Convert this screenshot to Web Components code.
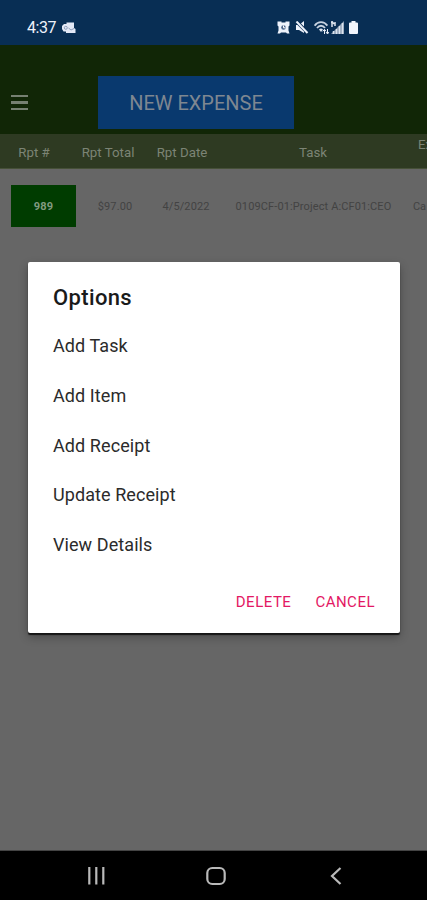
<!DOCTYPE html>
<html lang="en">
<head>
<meta charset="utf-8">
<title>Expenses</title>
<style>
html,body{margin:0;height:100%;overflow:hidden;background:#000;font-family:Roboto,"Liberation Sans",sans-serif}
</style>
</head>
<body>
<expense-app></expense-app>
<script>
const define = (name, html) => customElements.define(name, class extends HTMLElement {
  constructor() {
    super();
    const t = document.createElement('template');
    t.innerHTML = html;
    this.attachShadow({mode: 'open'}).append(t.content.cloneNode(true));
  }
});

define('status-bar', `
<style>
:host{display:flex;box-sizing:border-box;height:45px;padding:10px 69px 0 27px;background:#082e54;color:#edf2fb;justify-content:space-between;align-items:center}
.l{display:flex;align-items:center;gap:6px;font-size:16px;line-height:20px;font-weight:400;letter-spacing:-.45px}
.r{display:flex;gap:5px;align-items:center}
svg{display:block}
</style>
<div class="l"><span>4:37</span>
<svg width="14" height="12" viewBox="0 0 14 12"><path d="M4.500 .5H12v5.500l1.500 1V11H4V9.500H1.500L0 7V4l2-2h2.500z" fill="#e3e9f6"/><circle cx="3.800" cy="5.800" r="1.500" fill="none" stroke="#8496b3" stroke-width=".9"/><path d="M6.500 6l2.500 2 3-1.500" fill="none" stroke="#8496b3" stroke-width=".9"/></svg></div>
<div class="r">
<svg width="13" height="13" viewBox="0 0 13 13"><path d="M.5.5h4v1h4v-1h4v4l-1 1v4l1 3H10l-1-1H4l-1 1H.5l1-3v-4l-1-1z" fill="#edf2fb"/><circle cx="6.500" cy="6.500" r="2.300" fill="#4b658a"/><path d="M6.500 4.500v2.300h2" fill="none" stroke="#fff"/></svg>
<svg width="14" height="13" viewBox="0 0 14 13"><path d="M1 4h3l5-4v12L4 9H1z" fill="#edf2fb"/><path d="M1 0l12 12" stroke="#082e54" stroke-width="3.500"/><path d="M1.500 .5l11 11.500" stroke="#edf2fb" stroke-width="2"/></svg>
<svg width="15" height="14" viewBox="0 0 15 14"><g fill="none" stroke="#c7d2e0" stroke-width="1.800"><path d="M.6 4.600C4 0 10 0 13.400 4.600M3 7c2.300-3 5.700-3 8 0"/></g><path d="M5 8.500q2-2 4 0l-2 2.500z" fill="#dde5ef"/><path d="M10.500 13V8.500M8.800 10.300l1.700-2 1.500 2M13.500 8v4.500M12 11l1.500 2L15 11" fill="none" stroke="#edf2fb"/></svg>
<svg style="margin-left:-3px" width="13" height="13" viewBox="0 0 13 13"><path d="M0 13L13 0v13z" fill="#8fa1b6"/><path d="M2.500 13V10M5.500 13V8M8.500 13V5M11.500 13V2M1 1v5M0 2l1-1.500L3 3M4 1v4" stroke="#dbe4ee" stroke-width="1.500" fill="none"/></svg>
<svg width="9" height="13" viewBox="0 0 9 13"><path d="M2.500 0h4v1.500H8q1 0 1 1V12q0 1-1 1H1q-1 0-1-1V2.500q0-1 1-1h1.500z" fill="#f1f5fc"/></svg>
</div>`);

define('app-bar', `
<style>
:host{display:flex;box-sizing:border-box;height:89px;background:#112606;padding:31px 0 0 11px;align-items:flex-start}
.menu{display:flex;flex-direction:column;gap:4px;margin-top:19px;width:17px}
.menu i{height:2.400px;background:#768071}
button{all:unset;box-sizing:border-box;margin-left:70px;width:196px;height:53px;background:#09396e;color:#7e8791;text-align:center;font-size:20px;line-height:55px;letter-spacing:0}
</style>
<div class="menu"><i></i><i></i><i></i></div><button><slot></slot></button>`);

define('table-row', `
<style>
:host{display:grid;grid-template-columns:68px 80px 68px 194px 60px;text-align:center;white-space:nowrap;overflow:hidden}
:host([head]){height:35px;box-sizing:border-box;background:#2e3a22;border-bottom:1px solid #465038;color:#7c8475;font-size:13.300px;line-height:37px}
:host(:not([head])){margin-top:16px;height:43px;line-height:43px;color:#434343;font-size:11px;letter-spacing:.12px}
</style><slot></slot>`);

define('report-badge', `
<style>:host{display:block;margin-left:11px;width:65px;height:42px;line-height:43px;background:#003c00;color:#829a80;font-weight:700;font-size:11px}</style><slot></slot>`);

define('options-dialog', `
<style>
:host{position:absolute;left:28px;top:262px;width:372px;height:371px;box-sizing:border-box;background:#fff;border-radius:2px;padding:21px 25px 0;box-shadow:0 2px 1px #161616,0 4px 10px rgba(0,0,0,.3);color:#2b2b2b}
h2{margin:0 0 9px;font-size:22px;line-height:29px;font-weight:500;color:#1a1a1a;letter-spacing:.36px}
footer{display:flex;justify-content:flex-end;gap:24px;margin-top:20px;color:#e31864;font-size:15px;line-height:24px;letter-spacing:.5px}
</style>
<h2><slot name="title"></slot></h2><slot></slot>
<footer><slot name="action"></slot></footer>`);

define('option-item', `<style>:host{display:block;height:49.75px;line-height:50px;font-size:18px;letter-spacing:.08px}</style><slot></slot>`);

define('nav-bar', `
<style>:host{display:flex;height:49px;background:#000}svg{display:block}</style>
<svg width="427" height="49" viewBox="0 0 427 49" fill="none" stroke="#b9b9b9" stroke-width="2.200"><path d="M89.300 16v17.500M96.300 16v17.500M103.300 16v17.500"/><rect x="207.300" y="17" width="17.400" height="16" rx="5"/><path d="M340.500 17L332 25l8.500 8"/></svg>`);

define('expense-app', `
<style>
:host{display:flex;flex-direction:column;width:427px;height:900px;position:relative;overflow:hidden}
main{flex:1;background:#666;border-bottom:1px solid #444;box-sizing:border-box}
.date{padding-left:8px}
.total{padding-left:14px}
.task{padding-left:1px}
.cut{text-align:left;padding-left:3px;letter-spacing:-.2px}
.head-cut{text-align:left;padding-left:8px;line-height:22px}
</style>
<status-bar></status-bar>
<app-bar>NEW EXPENSE</app-bar>
<table-row head><span>Rpt #</span><span>Rpt Total</span><span>Rpt Date</span><span>Task</span><span class="head-cut">Ex</span></table-row>
<main><table-row><report-badge>989</report-badge><span class="total">$97.00</span><span class="date">4/5/2022</span><span class="task">0109CF-01:Project A:CF01:CEO</span><span class="cut">Ca</span></table-row></main>
<nav-bar></nav-bar>
<options-dialog>
<span slot="title">Options</span>
<option-item>Add Task</option-item><option-item>Add Item</option-item><option-item>Add Receipt</option-item><option-item>Update Receipt</option-item><option-item>View Details</option-item>
<span slot="action">DELETE</span><span slot="action">CANCEL</span>
</options-dialog>`);
</script>
</body>
</html>
